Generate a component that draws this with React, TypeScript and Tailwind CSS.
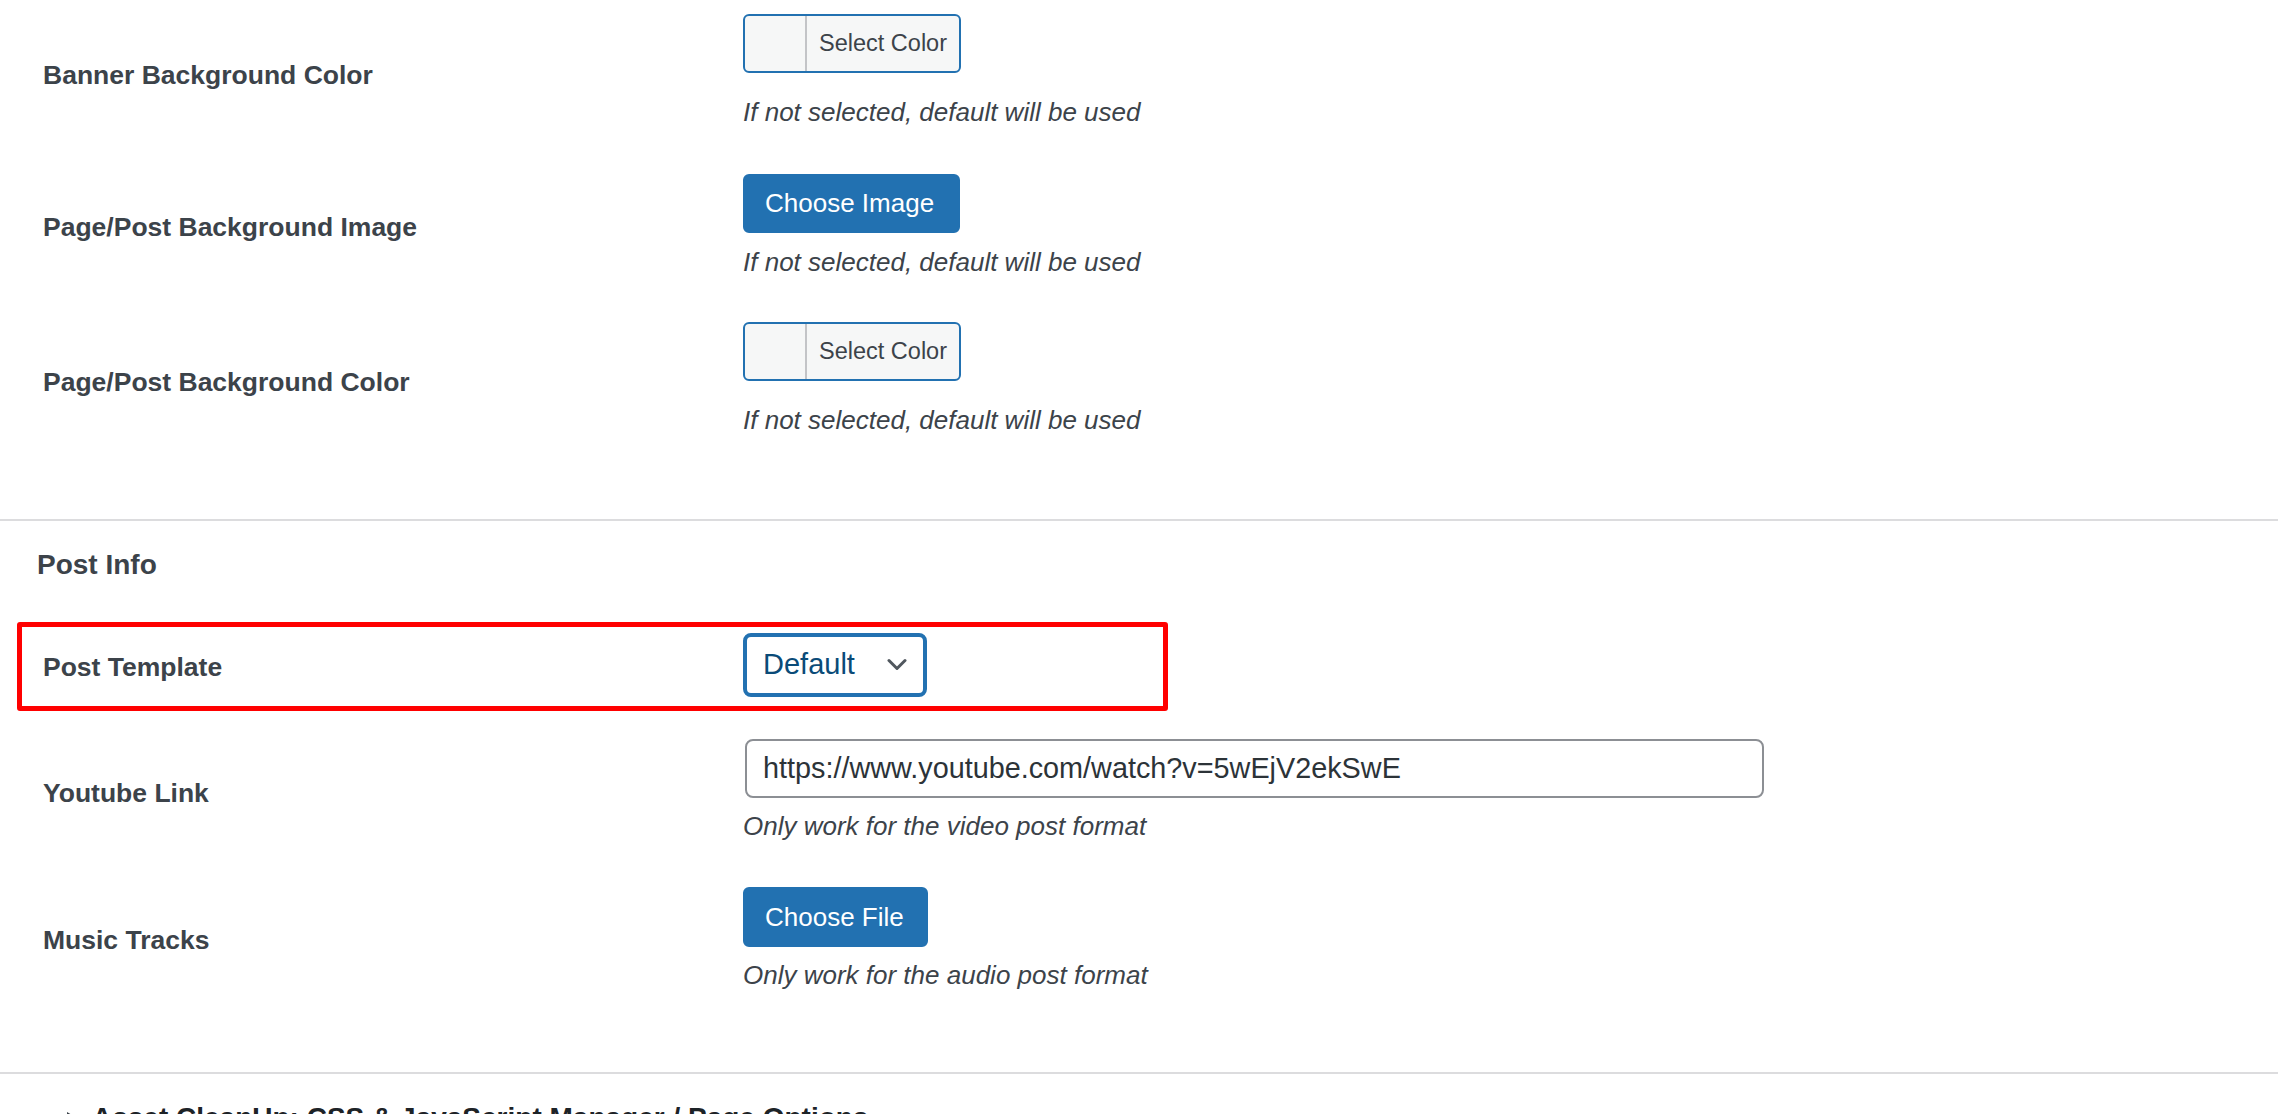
import React from "react";

function Label({ children }: { children: React.ReactNode }) {
  return (
    <div className="text-[26.5px] leading-none font-bold text-[#3c434a] whitespace-nowrap">
      {children}
    </div>
  );
}

function Hint({ className, children }: { className: string; children: React.ReactNode }) {
  return (
    <p className={"text-[26px] leading-none italic text-[#3c434a] whitespace-nowrap " + className}>
      {children}
    </p>
  );
}

function ColorPicker() {
  return (
    <div className="flex h-[59px] w-[218px] rounded-[6px] border-2 border-[#2271b1] bg-[#f6f7f7] overflow-hidden">
      <div className="w-[60px] shrink-0" />
      <div className="flex items-center border-l-2 border-[#c3c4c7] pl-[12px] pr-[12px] text-[23.5px] leading-none text-[#3c434a] whitespace-nowrap">
        Select Color
      </div>
    </div>
  );
}

function BlueButton({ children, className }: { children: React.ReactNode; className: string }) {
  return (
    <div
      className={
        "flex items-center rounded-[6px] bg-[#2271b1] border-2 border-[#2271b1] px-[20px] text-[26px] leading-none text-white whitespace-nowrap " +
        className
      }
    >
      {children}
    </div>
  );
}

export default function App() {
  return (
    <div className="w-[2278px] h-[1114px] overflow-hidden bg-white font-['Liberation_Sans',Arial,sans-serif]">
      <div className="pt-[14px]">
        {/* Row 1 */}
        <div className="flex">
          <div className="w-[743px] shrink-0 pl-[43px] pt-[47.5px]">
            <Label>Banner Background Color</Label>
          </div>
          <div className="flex flex-col items-start">
            <ColorPicker />
            <Hint className="mt-[25.6px]">If not selected, default will be used</Hint>
          </div>
        </div>

        {/* Row 2 */}
        <div className="flex mt-[49.4px]">
          <div className="w-[743px] shrink-0 pl-[43px] pt-[40.5px]">
            <Label>Page/Post Background Image</Label>
          </div>
          <div className="flex flex-col items-start">
            <BlueButton className="h-[59px] w-[217px]">Choose Image</BlueButton>
            <Hint className="mt-[15.6px]">If not selected, default will be used</Hint>
          </div>
        </div>

        {/* Row 3 */}
        <div className="flex mt-[47.4px]">
          <div className="w-[743px] shrink-0 pl-[43px] pt-[47.5px]">
            <Label>Page/Post Background Color</Label>
          </div>
          <div className="flex flex-col items-start">
            <ColorPicker />
            <Hint className="mt-[25.6px]">If not selected, default will be used</Hint>
          </div>
        </div>
      </div>

      <div className="mt-[86.4px] h-[2px] bg-[#dcdcde]" />

      <div className="mt-[30.35px] pl-[37px] text-[28px] leading-none font-bold text-[#3c434a]">
        Post Info
      </div>

      {/* Highlighted row */}
      <div className="mt-[42.65px] ml-[17px] w-[1151px] h-[89px] border-[5px] border-[#ff0000] rounded-[3px] flex">
        <div className="w-[721px] shrink-0 pl-[21px] pt-[27.5px]">
          <Label>Post Template</Label>
        </div>
        <div className="pt-[6px]">
          <div className="flex items-center justify-between w-[184px] h-[64px] border-[4px] border-[#2271b1] rounded-[8px] pl-[16px] pr-[16px] bg-white">
            <span className="text-[29px] leading-none text-[#0a4b78]">Default</span>
            <svg width="20" height="13" viewBox="0 0 20 13" fill="none">
              <path d="M2 2.5 L10 10.5 L18 2.5" stroke="#50575e" strokeWidth="3" strokeLinecap="round" strokeLinejoin="round" />
            </svg>
          </div>
        </div>
      </div>

      {/* Youtube row */}
      <div className="flex mt-[28px]">
        <div className="w-[743px] shrink-0 pl-[43px] pt-[41px]">
          <Label>Youtube Link</Label>
        </div>
        <div className="flex flex-col items-start">
          <div className="ml-[2px] flex items-center w-[1019px] h-[59px] border-2 border-[#8c8f94] rounded-[8px] pl-[16px] text-[28.8px] leading-none text-[#2c3338] whitespace-nowrap bg-white">
            https://www.youtube.com/watch?v=5wEjV2ekSwE
          </div>
          <Hint className="mt-[14.6px]">Only work for the video post format</Hint>
        </div>
      </div>

      {/* Music row */}
      <div className="flex mt-[48.4px]">
        <div className="w-[743px] shrink-0 pl-[43px] pt-[40px]">
          <Label>Music Tracks</Label>
        </div>
        <div className="flex flex-col items-start">
          <BlueButton className="h-[60px] w-[185px]">Choose File</BlueButton>
          <Hint className="mt-[14.6px]">Only work for the audio post format</Hint>
        </div>
      </div>

      <div className="mt-[84.4px] h-[2px] bg-[#dcdcde]" />

      <div className="mt-[30.35px] flex items-start">
        <svg className="ml-[66px] mt-[7px] shrink-0" width="12" height="14" viewBox="0 0 12 14">
          <path d="M1 1 L11 7 L1 13 Z" fill="#3c434a" />
        </svg>
        <div className="ml-[14px] text-[28px] leading-none font-bold text-[#1d2327] whitespace-nowrap">
          Asset CleanUp: CSS &amp; JavaScript Manager / Page Options
        </div>
      </div>
    </div>
  );
}
